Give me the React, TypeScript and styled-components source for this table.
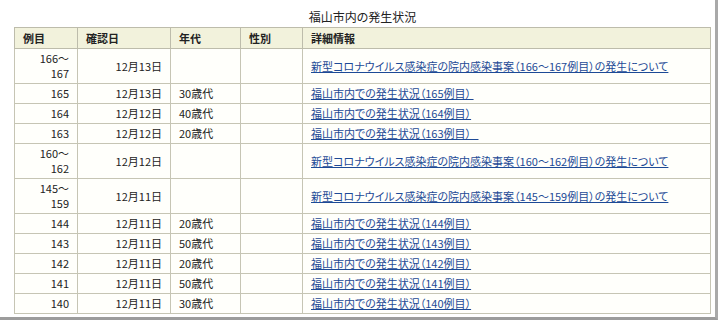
import React from 'react';
import styled, { createGlobalStyle } from 'styled-components';

const GlobalStyle = createGlobalStyle`
  html, body {
    margin: 0;
    padding: 0;
    background: #ffffff;
  }
  body {
    font-family: "Noto Sans CJK JP", "Noto Sans", sans-serif;
    color: #222;
  }
`;

const Frame = styled.div`
  width: 718px;
  height: 320px;
  box-sizing: border-box;
  padding: 9px 0 0 14px;
  border-right: 3px solid #a9a9a9;
  border-bottom: 3px solid #9c9c9c;
  background: #fff;
`;

const Table = styled.table`
  width: 697px;
  table-layout: fixed;
  border-collapse: collapse;
  font-size: 11px;
  font-feature-settings: "palt";
  background: #fffffb;
  border: 1px solid #aeae9c;
`;

const Caption = styled.caption`
  font-size: 12px;
  line-height: 16px;
  padding-bottom: 2px;
  color: #222;
  font-weight: normal;
`;

const HeadCell = styled.th`
  background: #f2f2dc;
  border: 1px solid #bdbcab;
  padding: 2px 8px;
  line-height: 16px;
  text-align: left;
  font-weight: bold;
  color: #222;
`;

const Cell = styled.td<{ $align?: 'left' | 'right' }>`
  border: 1px solid #c6c5b4;
  padding: 2px 8px;
  line-height: 15px;
  text-align: ${(p) => p.$align || 'left'};
  vertical-align: middle;
  color: #222;
`;

const Link = styled.a`
  color: #1d4a96;
  text-decoration: underline;
  white-space: pre;
`;

type Row = {
  no: string[];
  date: string;
  age: string;
  sex: string;
  info: string;
};

const rows: Row[] = [
  { no: ['166～', '167'], date: '12月13日', age: '', sex: '', info: '新型コロナウイルス感染症の院内感染事案（166～167例目）の発生について' },
  { no: ['165'], date: '12月13日', age: '30歳代', sex: '', info: '福山市内での発生状況（165例目） ' },
  { no: ['164'], date: '12月12日', age: '40歳代', sex: '', info: '福山市内での発生状況（164例目）' },
  { no: ['163'], date: '12月12日', age: '20歳代', sex: '', info: '福山市内での発生状況（163例目）   ' },
  { no: ['160～', '162'], date: '12月12日', age: '', sex: '', info: '新型コロナウイルス感染症の院内感染事案（160～162例目）の発生について' },
  { no: ['145～', '159'], date: '12月11日', age: '', sex: '', info: '新型コロナウイルス感染症の院内感染事案（145～159例目）の発生について' },
  { no: ['144'], date: '12月11日', age: '20歳代', sex: '', info: '福山市内での発生状況（144例目）' },
  { no: ['143'], date: '12月11日', age: '50歳代', sex: '', info: '福山市内での発生状況（143例目）' },
  { no: ['142'], date: '12月11日', age: '20歳代', sex: '', info: '福山市内での発生状況（142例目）' },
  { no: ['141'], date: '12月11日', age: '50歳代', sex: '', info: '福山市内での発生状況（141例目）' },
  { no: ['140'], date: '12月11日', age: '30歳代', sex: '', info: '福山市内での発生状況（140例目）' },
];

const App: React.FC = () => {
  return (
    <>
      <GlobalStyle />
      <Frame>
        <Table>
          <Caption>福山市内の発生状況</Caption>
          <colgroup>
            <col style={{ width: 63 }} />
            <col style={{ width: 93 }} />
            <col style={{ width: 70 }} />
            <col style={{ width: 62 }} />
            <col />
          </colgroup>
          <thead>
            <tr>
              <HeadCell>例目</HeadCell>
              <HeadCell>確認日</HeadCell>
              <HeadCell>年代</HeadCell>
              <HeadCell>性別</HeadCell>
              <HeadCell>詳細情報</HeadCell>
            </tr>
          </thead>
          <tbody>
            {rows.map((r, i) => (
              <tr key={i}>
                <Cell $align="right">
                  {r.no.map((n, j) => (
                    <React.Fragment key={j}>
                      {j > 0 && <br />}
                      {n}
                    </React.Fragment>
                  ))}
                </Cell>
                <Cell $align="right">{r.date}</Cell>
                <Cell>{r.age}</Cell>
                <Cell>{r.sex}</Cell>
                <Cell>
                  <Link href="#">{r.info}</Link>
                </Cell>
              </tr>
            ))}
          </tbody>
        </Table>
      </Frame>
    </>
  );
};

export default App;
